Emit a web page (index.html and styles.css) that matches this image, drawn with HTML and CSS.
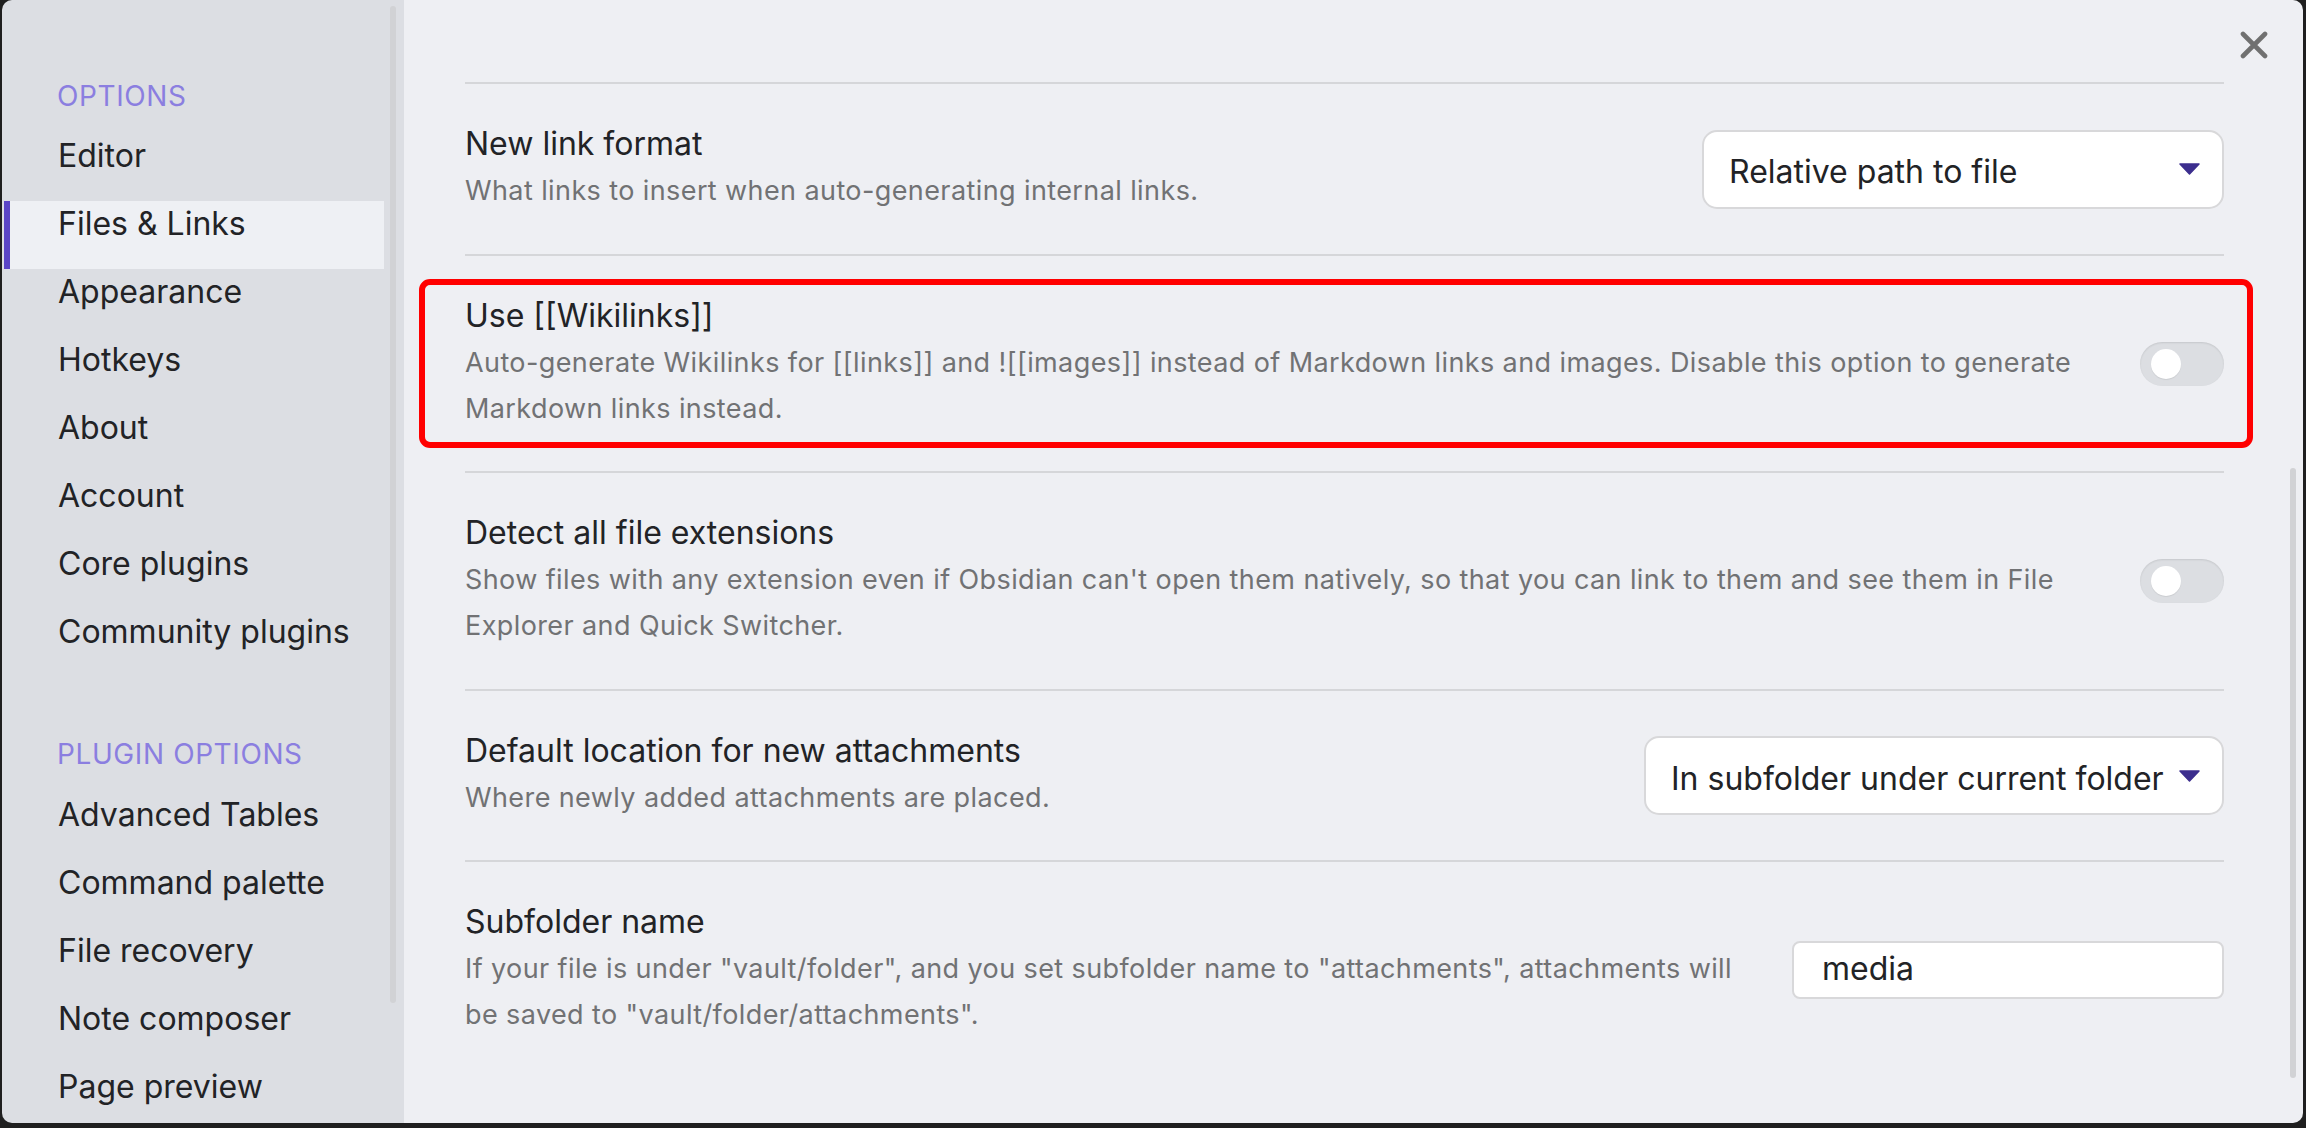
FILE: index.html
```html
<!DOCTYPE html>
<html lang="en">
<head>
<meta charset="utf-8">
<title>Settings - Files &amp; Links</title>
<link rel="stylesheet" href="styles.css">
</head>
<body>
<div class="window">
  <aside class="sidebar">
    <nav class="nav">
      <div class="group-title">Options</div>
      <div class="nav-item">Editor</div>
      <div class="nav-item active">Files &amp; Links</div>
      <div class="nav-item">Appearance</div>
      <div class="nav-item">Hotkeys</div>
      <div class="nav-item">About</div>
      <div class="nav-item">Account</div>
      <div class="nav-item">Core plugins</div>
      <div class="nav-item">Community plugins</div>
      <div class="group-title group-second">Plugin options</div>
      <div class="nav-item">Advanced Tables</div>
      <div class="nav-item">Command palette</div>
      <div class="nav-item">File recovery</div>
      <div class="nav-item">Note composer</div>
      <div class="nav-item">Page preview</div>
    </nav>
    <div class="sidebar-scrollbar"></div>
  </aside>
  <main class="content">
    <button class="close" aria-label="Close">
      <svg width="28" height="28" viewBox="0 0 28 28"><path d="M3 3 L25 25 M25 3 L3 25" stroke="#707070" stroke-width="4.6" stroke-linecap="round" fill="none"/></svg>
    </button>
    <div class="settings">
      <div class="setting">
        <div class="info">
          <div class="name">New link format</div>
          <div class="desc">What links to insert when auto-generating internal links.</div>
        </div>
        <div class="dropdown dropdown-link">
          <span class="dropdown-label">Relative path to file</span>
          <svg class="arrow" width="21" height="12" viewBox="0 0 21 12"><path d="M1 1 L20 1 L10.5 11 Z" fill="#3c2e8e" stroke="#3c2e8e" stroke-width="1.5" stroke-linejoin="round"/></svg>
        </div>
      </div>
      <div class="setting highlighted">
        <div class="info">
          <div class="name">Use [[Wikilinks]]</div>
          <div class="desc">Auto-generate Wikilinks for [[links]] and ![[images]] instead of Markdown links and images. Disable this option to generate Markdown links instead.</div>
        </div>
        <div class="toggle"><span class="knob"></span></div>
      </div>
      <div class="setting">
        <div class="info">
          <div class="name">Detect all file extensions</div>
          <div class="desc">Show files with any extension even if Obsidian can't open them natively, so that you can link to them and see them in File Explorer and Quick Switcher.</div>
        </div>
        <div class="toggle"><span class="knob"></span></div>
      </div>
      <div class="setting">
        <div class="info">
          <div class="name">Default location for new attachments</div>
          <div class="desc">Where newly added attachments are placed.</div>
        </div>
        <div class="dropdown dropdown-location">
          <span class="dropdown-label">In subfolder under current folder</span>
          <svg class="arrow" width="21" height="12" viewBox="0 0 21 12"><path d="M1 1 L20 1 L10.5 11 Z" fill="#3c2e8e" stroke="#3c2e8e" stroke-width="1.5" stroke-linejoin="round"/></svg>
        </div>
      </div>
      <div class="setting">
        <div class="info">
          <div class="name">Subfolder name</div>
          <div class="desc">If your file is under "vault/folder", and you set subfolder name to "attachments", attachments will be saved to "vault/folder/attachments".</div>
        </div>
        <div class="text-input">media</div>
      </div>
    </div>
    <div class="content-scrollbar"></div>
  </main>
</div>
</body>
</html>
```
FILE: styles.css
```css
html, body {
  margin: 0;
  padding: 0;
}
body {
  background: #1f1f1f;
  width: 2306px;
  height: 1128px;
  overflow: hidden;
  font-family: Inter, "Noto Sans", "Liberation Sans", sans-serif;
  color: #222326;
}
.window {
  margin-left: 2px;
  width: 2301px;
  height: 1123px;
  border-radius: 10px;
  overflow: hidden;
  display: flex;
}
.sidebar {
  width: 402px;
  flex: 0 0 402px;
  background: #dcdee3;
  display: flex;
  align-items: flex-start;
}
.nav {
  flex: 1;
  padding-left: 2px;
  padding-top: 78px;
}
.group-title {
  font-size: 28px;
  line-height: 36px;
  letter-spacing: 0.6px;
  text-transform: uppercase;
  color: #8b7ee0;
  padding-left: 53px;
  margin-bottom: 19px;
}
.group-second {
  margin-top: 59px;
  margin-bottom: 20px;
}
.nav-item {
  font-size: 32px;
  line-height: 40px;
  height: 68px;
  box-sizing: border-box;
  padding: 3px 0 25px 54px;
  color: #222326;
  white-space: nowrap;
}
.nav-item.active {
  background: #eef0f4;
  box-shadow: inset 6px 0 0 #5b45c6;
}
.sidebar-scrollbar {
  width: 6px;
  height: 997px;
  margin: 6px 8px 0 6px;
  background: #d1d2d5;
  border-radius: 3px;
}
.content {
  flex: 1;
  background: #eeeff3;
  display: flex;
  align-items: flex-start;
  position: relative;
}
.close {
  position: absolute;
  top: 31px;
  right: 35px;
  width: 28px;
  height: 28px;
  padding: 0;
  border: 0;
  background: transparent;
  display: block;
}
.close svg {
  display: block;
}
.settings {
  flex: 1;
  padding: 82px 0 0 61px;
}
.setting {
  display: flex;
  align-items: center;
  border-top: 2px solid #d5d6d9;
  padding: 40px 0 39.5px;
  position: relative;
}
.highlighted::after {
  content: "";
  position: absolute;
  top: 23.5px;
  bottom: 23px;
  left: -46px;
  right: -29px;
  border: 6px solid #ff0000;
  border-radius: 11px;
}
.info {
  flex: 1 1 auto;
  margin-right: 24px;
}
.name {
  font-size: 32px;
  line-height: 40px;
  margin-bottom: 4px;
  color: #222326;
}
.desc {
  font-size: 27px;
  line-height: 46px;
  letter-spacing: 0.4px;
  color: #717274;
}
.dropdown {
  flex: 0 0 auto;
  display: flex;
  align-items: center;
  justify-content: space-between;
  box-sizing: border-box;
  height: 79px;
  padding: 0 22px 0 25px;
  background: #ffffff;
  border: 2px solid #d8d8da;
  border-radius: 15px;
}
.dropdown-link {
  width: 522px;
}
.dropdown-location {
  width: 580px;
}
.dropdown-label {
  font-size: 32px;
  line-height: 40px;
  padding-top: 6px;
  color: #222326;
  white-space: nowrap;
}
.arrow {
  display: block;
  flex: 0 0 auto;
}
.toggle {
  flex: 0 0 auto;
  width: 84px;
  height: 44px;
  box-sizing: border-box;
  border-radius: 22px;
  background: #dcdee2;
  box-shadow: inset 0 1px 2px rgba(0, 0, 0, 0.10);
  display: flex;
  align-items: center;
  padding-left: 11px;
}
.knob {
  width: 30px;
  height: 30px;
  border-radius: 50%;
  background: #ffffff;
  box-shadow: 0 1px 1px rgba(0, 0, 0, 0.08);
}
.text-input {
  flex: 0 0 auto;
  width: 432px;
  height: 58px;
  box-sizing: border-box;
  background: #ffffff;
  border: 2px solid #d8d8da;
  border-radius: 8px;
  padding: 0 0 2px 28px;
  font-size: 32px;
  line-height: 52px;
  color: #222326;
}
.content-scrollbar {
  flex: 0 0 6px;
  width: 6px;
  height: 610px;
  margin: 468px 7px 0 66px;
  background: #d1d2d5;
  border-radius: 3px;
}
```
